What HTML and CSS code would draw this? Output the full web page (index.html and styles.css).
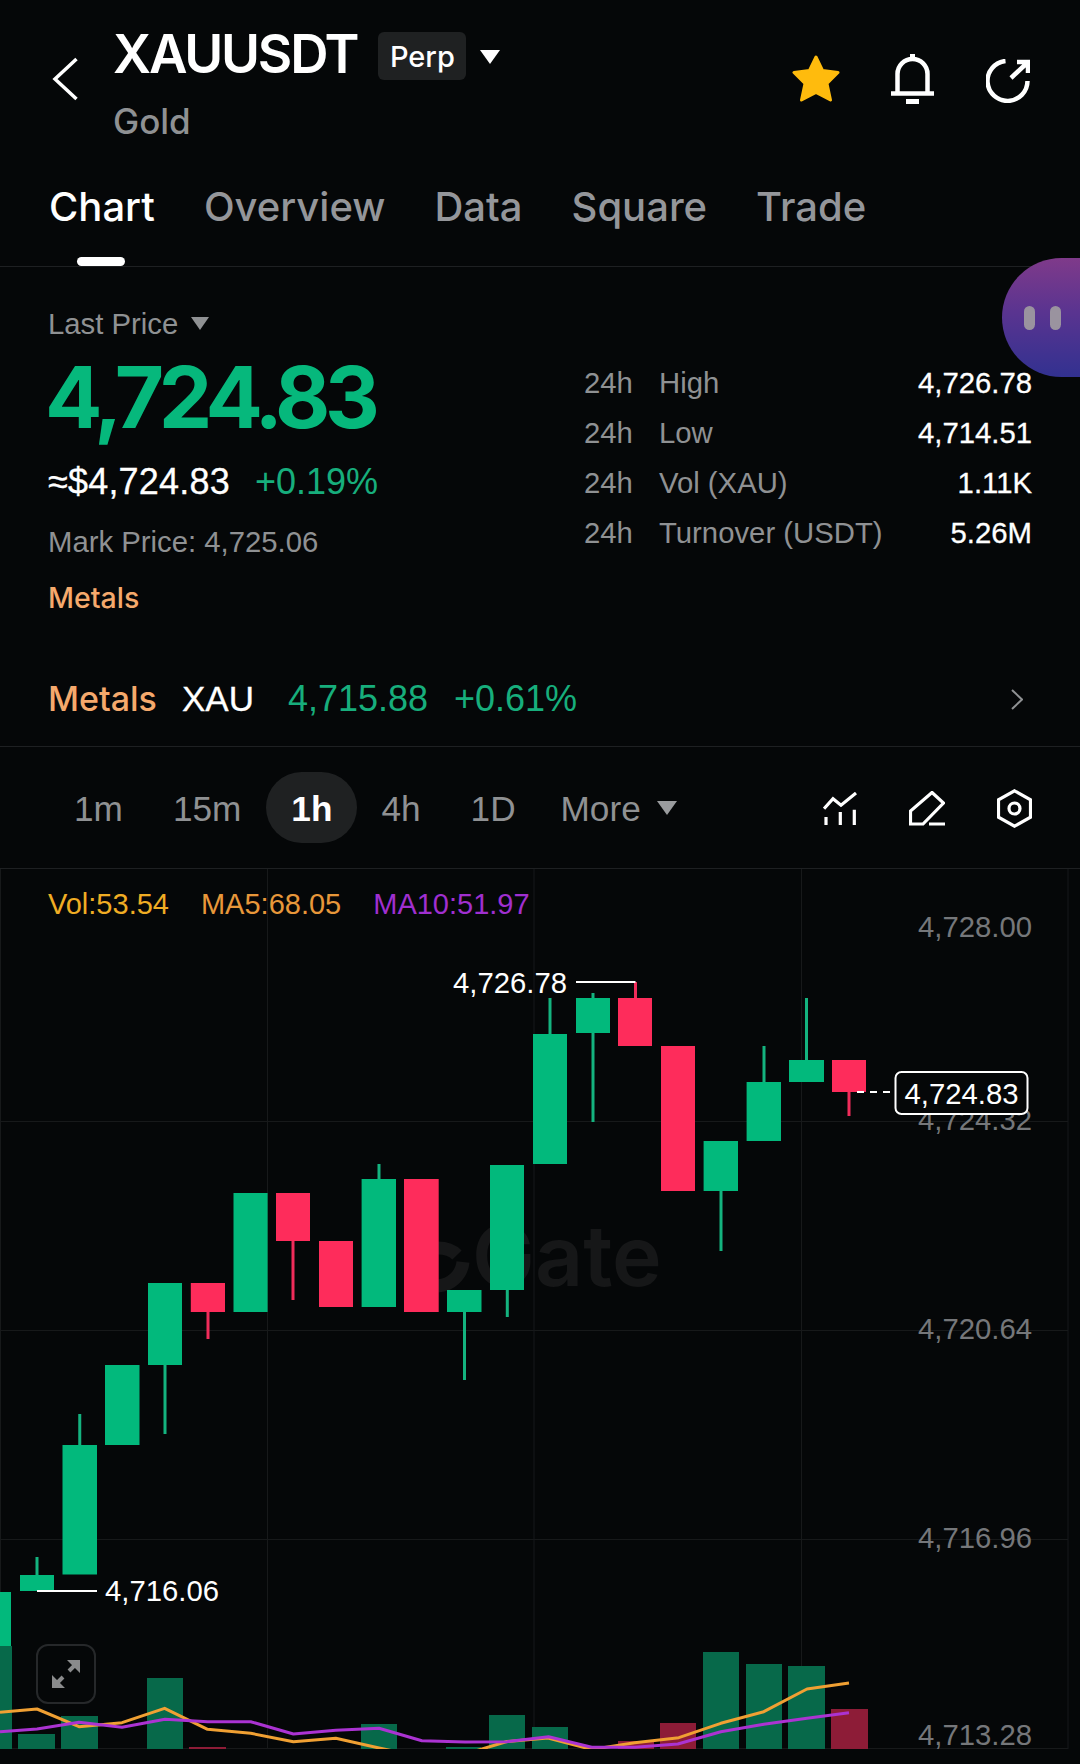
FILE: index.html
```html
<!DOCTYPE html>
<html lang="en">
<head>
<meta charset="utf-8">
<title>XAUUSDT</title>
<link rel="stylesheet" href="styles.css">
</head>
<body>
<div class="app">
  <header class="topbar">
    <svg class="back" viewBox="0 0 26 44"><path d="M24.5 2 3 22l21.5 20"/></svg>
    <div class="title-block">
      <div class="title-line">
        <h1 class="title">XAUUSDT</h1>
        <span class="perp">Perp</span>
        <svg class="caret-title" viewBox="0 0 20 14"><path d="M0 0h20L10 14z"/></svg>
      </div>
      <div class="subtitle">Gold</div>
    </div>
    <div class="top-actions">
      <svg class="star" viewBox="0 0 50 48"><path d="M25 2l6.500 13.500L47 17.500 36 28.500 39.500 45 25 37.500 10.500 45 14 28.500 3 17.500 18.500 15.500z"/></svg>
      <svg class="bell" viewBox="0 0 43 50"><path class="bell-line" d="M6.500 39V20a15 15 0 0 1 30 0v19M0 39.500h43"/><path class="bell-fill" d="M19 0h5v7h-5zM15 45h13v5H15z"/></svg>
      <svg class="share" viewBox="0 0 44 44"><path d="M19.500 2A20 20 0 1 0 41.500 22M25 19 41 4M31 3h11v11"/></svg>
    </div>
  </header>

  <nav class="tabs">
    <span class="tab tab-active">Chart</span>
    <span class="tab">Overview</span>
    <span class="tab">Data</span>
    <span class="tab">Square</span>
    <span class="tab">Trade</span>
  </nav>

  <section class="summary">
    <div class="price-col">
      <div class="last-line">Last Price<svg class="caret-small" viewBox="0 0 18 13"><path d="M0 0h18L9 13z"/></svg></div>
      <div class="big-price">4,724.83</div>
      <div class="approx-line"><span class="approx">≈$4,724.83</span><span class="change">+0.19%</span></div>
      <div class="mark">Mark Price: 4,725.06</div>
      <div class="tag">Metals</div>
    </div>
    <dl class="stats">
      <div class="stat"><dt class="stat-h">24h</dt><dt class="stat-label">High</dt><dd class="stat-value">4,726.78</dd></div>
      <div class="stat"><dt class="stat-h">24h</dt><dt class="stat-label">Low</dt><dd class="stat-value">4,714.51</dd></div>
      <div class="stat"><dt class="stat-h">24h</dt><dt class="stat-label">Vol (XAU)</dt><dd class="stat-value">1.11K</dd></div>
      <div class="stat"><dt class="stat-h">24h</dt><dt class="stat-label">Turnover (USDT)</dt><dd class="stat-value">5.26M</dd></div>
    </dl>
  </section>

  <section class="sector">
    <span class="sector-name">Metals</span>
    <span class="sector-coin">XAU</span>
    <span class="sector-price">4,715.88</span>
    <span class="sector-change">+0.61%</span>
    <svg class="chev" viewBox="0 0 12 21"><path d="M1 1l10 9.500L1 20"/></svg>
  </section>

  <section class="timeframes">
    <span class="tf">1m</span>
    <span class="tf">15m</span>
    <span class="tf tf-active">1h</span>
    <span class="tf">4h</span>
    <span class="tf">1D</span>
    <span class="tf tf-more">More<svg class="caret-more" viewBox="0 0 20 14"><path d="M0 0h20L10 14z"/></svg></span>
    <div class="tools">
      <svg class="tool tool-ind" viewBox="0 0 34 34"><path d="M1 16.700 10 6.700l8 6.600L33 1M3 25v8M17.300 20v13M31.300 17.700V33"/></svg>
      <svg class="tool tool-pen" viewBox="0 0 36 35"><path d="M23 1.500 34.500 12 14 33H1.500V20zM20 33h16"/></svg>
      <svg class="tool tool-hex" viewBox="0 0 35 39"><path d="M17.500 1.800 33.500 10.800v17.400l-16 9-16-9V10.800z"/><circle cx="17.500" cy="19.500" r="5.500"/></svg>
    </div>
  </section>

  <section class="chart">
    <svg class="plot" viewBox="0 869 1080 895">
      <defs>
        <clipPath id="plot-area"><rect x="0" y="869" width="1080" height="880"/></clipPath>
      </defs>
      <path class="grid" d="M0 1121.500H1068M0 1330.500H1068M0 1539.500H1068M0 1748.500H1068M.5 869V1749M267.500 869V1749M534 869V1749M801.500 869V1749M1068 869V1749"/>

      <g class="watermark">
        <path class="wm-arc" d="M438 1248q12 0 19 7M463 1262a27 27 0 0 1-25 24"/>
        <text class="wm-text" x="472" y="1286">Gate</text>
      </g>

      <path class="vol-up" d="M0 1646H12V1749H0ZM18 1734H55V1749H18ZM61 1716H98V1749H61ZM147 1678H183V1749H147ZM361 1724H397V1749H361ZM446 1747H481V1749H446ZM489 1715H525V1749H489ZM532 1727H568V1749H532ZM703 1652H739V1749H703ZM746 1664H782V1749H746ZM788 1666H825V1749H788Z"/>
      <path class="vol-down" d="M189 1747H226V1749H189ZM618 1741H654V1749H618ZM660 1723H696V1749H660ZM831 1709H868V1749H831Z"/>

      <path class="wick-up" d="M37 1557V1575M79.750 1414V1445M165 1365V1434M379 1164V1179M464.500 1312V1380M507.300 1290V1317M550 998V1034M593 993V998M593 1033V1122M721 1191V1251M764 1046V1082M806.500 998V1060"/>
      <path class="wick-down" d="M208 1312V1339M293 1241V1300M635.500 982V998M849 1092V1116"/>
      <path class="body-up" d="M0 1592H11V1646H0ZM20 1575H54V1591H20ZM62.500 1445H97V1574.500H62.500ZM105 1365H139.500V1445H105ZM148 1283H182V1365H148ZM233.500 1193H267.600V1312H233.500ZM361.600 1179H396V1307H361.600ZM447 1290H481.500V1312H447ZM490 1165H524V1290H490ZM533 1034H567V1164H533ZM576 998H610V1033H576ZM703.600 1141H738V1191H703.600ZM746.600 1082H781V1141H746.600ZM789 1060H824V1082H789Z"/>
      <path class="body-down" d="M190.800 1283H225V1312H190.800ZM276 1193H310V1241H276ZM319 1241H353V1307H319ZM404 1179H438.700V1312H404ZM618 998H652V1046H618ZM661 1046H695V1191H661ZM832 1060H866V1092H832Z"/>

      <g clip-path="url(#plot-area)">
        <polyline class="ma5" points="0,1712.300 37,1709 79,1726.700 122,1722.700 164.600,1708.300 207.600,1729.300 250.700,1733.300 293.400,1741.700 335.800,1738.300 379,1748 403,1753 472,1752 507,1741.500 548,1738 591.700,1749.500 634.700,1742.700 678.800,1737.700 720.800,1723.300 763.800,1711.700 807,1689 849,1683"/>
        <polyline class="ma10" points="0,1731.700 37,1729 79,1722.300 122,1727.300 165,1719.300 207.600,1721.700 250.700,1721.700 293.400,1734 335.800,1730.300 379,1728.300 421.900,1740.700 465,1742 507,1741.700 548.600,1736.700 591.700,1747.300 634.700,1747.300 677.800,1744 720.800,1731.700 763.800,1724.300 807,1718.300 849,1712.700"/>
      </g>

      <path class="callout-line" d="M576 982H635.500M37 1591H97"/>
      <path class="dash-line" d="M857 1092H895"/>

      <text class="axis" x="1032" y="937">4,728.00</text>
      <text class="axis" x="1032" y="1130">4,724.32</text>
      <text class="axis" x="1032" y="1339">4,720.64</text>
      <text class="axis" x="1032" y="1547.500">4,716.96</text>
      <text class="axis" x="1032" y="1745">4,713.28</text>

      <text class="callout" x="453" y="993">4,726.78</text>
      <text class="callout" x="105" y="1601">4,716.06</text>

      <rect class="price-box" x="895.500" y="1072" width="132" height="42" rx="6"/>
      <text class="price-box-text" x="961.500" y="1104">4,724.83</text>
    </svg>

    <div class="legend">
      <span class="leg-vol">Vol:53.54</span>
      <span class="leg-ma5">MA5:68.05</span>
      <span class="leg-ma10">MA10:51.97</span>
    </div>

    <div class="expand">
      <svg class="expand-icon" viewBox="0 0 28 28"><path class="expand-head" d="M28 0V13L15 0ZM0 28V15L13 28Z"/><path class="expand-shaft" d="M5 23l6-6M17 11l6-6"/></svg>
    </div>
  </section>

  <div class="bubble"><span class="bubble-dot"></span><span class="bubble-dot"></span></div>
</div>
</body>
</html>
```
FILE: styles.css
```css
* { box-sizing: border-box; }
html, body { margin: 0; padding: 0; background: #050708; }
svg { display: block; }
h1, dl, dd, dt { margin: 0; padding: 0; font-weight: inherit; }

.app {
  position: relative;
  width: 1080px;
  height: 1764px;
  overflow: hidden;
  background: #050708;
  color: #fff;
  font-family: "Liberation Sans", Arial, sans-serif;
  font-size: 29.300px;
}

/* top bar */
.topbar {
  display: flex;
  height: 160px;
  padding: 28px 50px 0 52px;
}
.back {
  width: 26px;
  height: 44px;
  margin-top: 29px;
  margin-right: 35px;
  fill: none;
  stroke: #fff;
  stroke-width: 3.500;
}
.title-line { display: flex; align-items: flex-start; height: 52px; }
.title {
  font-family: Inter, sans-serif;
  font-size: 53px;
  font-weight: 600;
  line-height: 52px;
  letter-spacing: -2.200px;
}
.perp {
  display: flex;
  align-items: center;
  justify-content: center;
  width: 88px;
  height: 48px;
  margin: 4px 0 0 21px;
  border-radius: 6px;
  background: #1f2122;
  font-family: Inter, sans-serif;
  font-size: 29px;
  font-weight: 500;
}
.caret-title { width: 20px; height: 14px; margin: 22px 0 0 14px; fill: #fff; }
.subtitle {
  margin-top: 21px;
  font-family: Inter, sans-serif;
  font-size: 35px;
  font-weight: 500;
  line-height: 40px;
  color: #8f9193;
}
.top-actions {
  display: flex;
  align-items: center;
  height: 50px;
  margin: 26px 0 0 auto;
}
.star { width: 50px; height: 48px; margin-right: 50px; fill: #ffbb0d; stroke: #ffbb0d; stroke-width: 3; stroke-linejoin: round; }
.bell { width: 43px; height: 50px; margin-right: 52px; }
.bell-line { fill: none; stroke: #fff; stroke-width: 4.500; }
.bell-fill { fill: #fff; }
.share { width: 44px; height: 44px; margin-top: 4px; fill: none; stroke: #fff; stroke-width: 4.500; }

/* tabs */
.tabs {
  display: flex;
  gap: 49px;
  height: 107px;
  padding: 23px 0 0 49px;
  border-bottom: 1px solid #1e2022;
}
.tab {
  position: relative;
  font-family: Inter, sans-serif;
  font-size: 40px;
  font-weight: 500;
  line-height: 48px;
  height: 48px;
  color: #94969a;
}
.tab-active { color: #fff; }
.tab-active::after {
  content: "";
  position: absolute;
  left: 28px;
  top: 74px;
  width: 48px;
  height: 9px;
  border-radius: 5px;
  background: #fff;
}

/* price summary */
.summary { display: flex; height: 383px; }
.price-col { width: 584px; padding: 37px 0 0 48px; }
.last-line { display: flex; align-items: center; height: 40px; line-height: 40px; color: #8f9193; }
.caret-small { width: 18px; height: 13px; margin: -1px 0 0 13px; fill: #8f9193; }
.big-price {
  margin: 9px 0 0 -3px;
  font-family: Inter, sans-serif;
  font-size: 85px;
  font-weight: 650;
  line-height: 90px;
  letter-spacing: -5.500px;
  color: #06b87c;
}
.approx-line { display: flex; gap: 25px; margin-top: 17px; font-size: 36px; line-height: 44px; }
.approx { letter-spacing: .2px; -webkit-text-stroke: .3px #fff; }
.change { color: #17ae7c; }
.mark { margin-top: 18px; line-height: 40px; color: #8f9193; }
.tag {
  margin-top: 16px;
  font-family: Inter, sans-serif;
  font-size: 28.500px;
  font-weight: 500;
  line-height: 40px;
  color: #f5a96c;
}
.stats { width: 448px; padding-top: 91px; }
.stat { display: flex; height: 50px; line-height: 50px; }
.stat-h { width: 75px; color: #8f9193; }
.stat-label { color: #8f9193; }
.stat-value { margin-left: auto; -webkit-text-stroke: .3px #fff; }

/* sector row */
.sector {
  display: flex;
  align-items: center;
  height: 97px;
  padding: 2px 57px 0 48px;
  border-bottom: 1px solid #1e2022;
  font-size: 36px;
}
.sector-name {
  width: 134px;
  margin-top: -1px;
  font-family: Inter, sans-serif;
  font-size: 34px;
  font-weight: 500;
  color: #f5a96c;
}
.sector-coin { width: 106px; font-size: 35px; -webkit-text-stroke: .3px #fff; }
.sector-price { width: 166px; color: #17ae7c; }
.sector-change { color: #17ae7c; }
.chev { width: 12px; height: 21px; margin-left: auto; fill: none; stroke: #8f9193; stroke-width: 2; }

/* timeframes */
.timeframes {
  display: flex;
  align-items: center;
  height: 122px;
  padding: 0 48px 0 49px;
  border-bottom: 1px solid #1e2022;
  font-size: 35.200px;
  color: #8f9193;
}
.tf { display: flex; align-items: center; height: 71px; padding: 2px 25px 0; }
.tf-active { margin-right: -1px; border-radius: 36px; background: #1f2122; color: #fff; font-weight: 700; }
.tf-more { padding-left: 20px; }
.caret-more { width: 20px; height: 14px; margin: -2px 0 0 16px; fill: #9a9c9e; }
.tools { display: flex; align-items: center; margin: 2px 0 0 auto; }
.tool { fill: none; stroke: #fff; stroke-width: 3.200; }
.tool-ind { width: 34px; height: 34px; margin-right: 52px; }
.tool-pen { width: 36px; height: 35px; margin-right: 52px; }
.tool-hex { width: 35px; height: 39px; }

/* chart */
.chart { position: relative; height: 895px; }
.plot { position: absolute; left: 0; top: 0; width: 1080px; height: 895px; }
.grid { fill: none; stroke: #17191a; stroke-width: 1; }
.watermark { fill: #161718; }
.wm-arc { fill: none; stroke: #161718; stroke-width: 13; }
.wm-text { font-family: Inter, sans-serif; font-size: 84px; font-weight: 600; }
.vol-up { fill: #07694a; }
.vol-down { fill: #8d1c37; }
.wick-up { fill: none; stroke: #14b37f; stroke-width: 3; }
.wick-down { fill: none; stroke: #f02c5a; stroke-width: 3; }
.body-up { fill: #02b97c; }
.body-down { fill: #fe2c5b; }
.ma5, .ma10 { fill: none; stroke-width: 3; stroke-linejoin: round; }
.ma5 { stroke: #f0a033; }
.ma10 { stroke: #ab33d2; }
.callout-line { fill: none; stroke: #fff; stroke-width: 2; }
.dash-line { fill: none; stroke: #fff; stroke-width: 2; stroke-dasharray: 7 6; }
.axis { fill: #75777a; font-size: 29.300px; text-anchor: end; }
.callout { fill: #fff; font-size: 29.300px; }
.price-box { fill: #050708; stroke: #fff; stroke-width: 2; }
.price-box-text { fill: #fff; font-size: 29.300px; text-anchor: middle; }

.legend {
  position: absolute;
  left: 48px;
  top: 15px;
  display: flex;
  gap: 32px;
  font-size: 29px;
  line-height: 40px;
}
.leg-vol { color: #f0ad24; }
.leg-ma5 { color: #e8973a; }
.leg-ma10 { color: #a02fd0; }

.expand {
  position: absolute;
  left: 36px;
  top: 775px;
  display: flex;
  align-items: center;
  justify-content: center;
  width: 60px;
  height: 60px;
  border: 2.500px solid #26282a;
  border-radius: 12px;
}
.expand-icon { width: 28px; height: 28px; }
.expand-head { fill: #8a8b8c; }
.expand-shaft { fill: none; stroke: #8a8b8c; stroke-width: 4; }

/* floating assistant */
.bubble {
  position: absolute;
  left: 1002px;
  top: 258px;
  display: flex;
  gap: 15px;
  align-items: center;
  width: 78px;
  height: 119px;
  padding-left: 22px;
  border-radius: 60px 0 0 60px;
  background: linear-gradient(180deg, #7f3a8a 0%, #5a3490 45%, #323190 100%);
}
.bubble-dot { width: 11px; height: 24px; border-radius: 6px; background: #9a939f; }
```
